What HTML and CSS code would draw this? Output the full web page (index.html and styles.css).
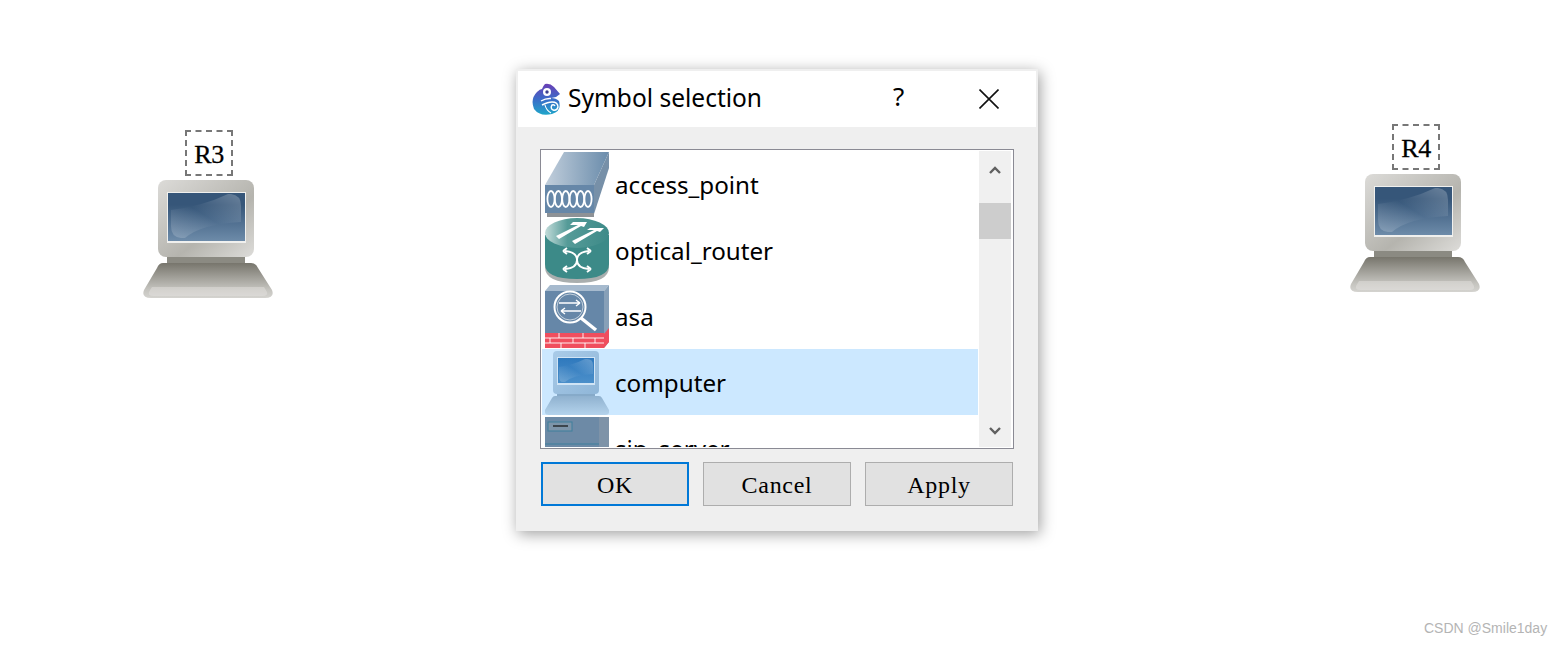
FILE: index.html
```html
<!DOCTYPE html>
<html lang="en">
<head>
    <meta charset="UTF-8">
    <title>Symbol selection</title>
    <link rel="stylesheet" href="styles.css">
</head>
<body>
    <svg class="defs" width="0" height="0">
        <defs>
            <linearGradient id="grayCase" x1="0" y1="0" x2="1" y2="1">
                <stop offset="0" stop-color="#dcdbd8"/><stop offset="0.6" stop-color="#b5b4ae"/><stop offset="1" stop-color="#dddcd9"/>
            </linearGradient>
            <linearGradient id="grayBase" x1="0" y1="0" x2="0" y2="1">
                <stop offset="0" stop-color="#77756c"/><stop offset="0.75" stop-color="#c4c3be"/><stop offset="1" stop-color="#d4d3cf"/>
            </linearGradient>
            <linearGradient id="grayScreen" x1="0" y1="0" x2="0" y2="1">
                <stop offset="0.25" stop-color="#365679"/><stop offset="1" stop-color="#6d8ba9"/>
            </linearGradient>
            <linearGradient id="glare" x1="0" y1="1" x2="1" y2="0">
                <stop offset="0" stop-color="#fff" stop-opacity="0.2"/><stop offset="0.5" stop-color="#fff" stop-opacity="0"/><stop offset="1" stop-color="#fff" stop-opacity="0.26"/>
            </linearGradient>
            <linearGradient id="blueCase" x1="0" y1="0" x2="1" y2="1">
                <stop offset="0" stop-color="#a9cbe8"/><stop offset="1" stop-color="#8fb6d8"/>
            </linearGradient>
            <linearGradient id="blueBase" x1="0" y1="0" x2="0" y2="1">
                <stop offset="0" stop-color="#8fb1cf"/><stop offset="1" stop-color="#b4d3ec"/>
            </linearGradient>
            <linearGradient id="blueScreen" x1="0" y1="0" x2="0" y2="1">
                <stop offset="0" stop-color="#2f79bd"/><stop offset="1" stop-color="#4b8fca"/>
            </linearGradient>
            <linearGradient id="apTop" x1="0" y1="0" x2="1" y2="0">
                <stop offset="0" stop-color="#c2cfdc"/><stop offset="1" stop-color="#6a8cab"/>
            </linearGradient>
            <linearGradient id="routerTop" x1="0" y1="0" x2="1" y2="0">
                <stop offset="0" stop-color="#c3dcda"/><stop offset="0.35" stop-color="#559b98"/><stop offset="1" stop-color="#3d8a88"/>
            </linearGradient>
            <linearGradient id="logoFill" x1="0" y1="0" x2="0" y2="1">
                <stop offset="0" stop-color="#6a3fb5"/><stop offset="0.5" stop-color="#3a6cc8"/><stop offset="1" stop-color="#1fa6c9"/>
            </linearGradient>
            <symbol id="grayPc" viewBox="0 0 130 118">
                <rect x="24" y="75" width="78" height="9" fill="#8b8a82"/>
                <rect x="15" y="0" width="96" height="77" rx="8" fill="url(#grayCase)"/>
                <rect x="24" y="12" width="79" height="51" fill="#f0f0ee"/>
                <rect x="25" y="13" width="77" height="48" fill="url(#grayScreen)"/>
                <path d="M28 30 Q60 26 85 14 H88 Q98 15 98 26 V42 Q58 44 42 58 H38 Q28 57 28 46Z" fill="url(#glare)"/>
                <path d="M20 83 H108 Q113 83 115 88 L129 110 Q132 118 122 118 H8 Q-2 118 1 110 L14 88 Q16 83 20 83Z" fill="url(#grayBase)"/>
                <path d="M6 112 Q5 116 10 116 H120 Q125 116 124 112 L121 107 H9Z" fill="#e6e5e2" opacity="0.45"/>
            </symbol>
            <symbol id="bluePc" viewBox="0 0 64 65">
                <rect x="12" y="42" width="38" height="5" fill="#86aac9"/>
                <rect x="8" y="1" width="46" height="43" rx="4" fill="url(#blueCase)"/>
                <rect x="12" y="7" width="38" height="28" fill="#d0e4f5"/>
                <rect x="13" y="8" width="36" height="25" fill="url(#blueScreen)"/>
                <path d="M14 17 Q28 15 40 9 H42 Q48 9 48 15 V24 Q28 25 20 32 H18 Q14 32 14 27Z" fill="url(#glare)"/>
                <path d="M10 46 H54 Q56 46 57 48 L64 60 Q65 65 60 65 H4 Q-1 65 0 60 L7 48 Q8 46 10 46Z" fill="url(#blueBase)"/>
            </symbol>
        </defs>
    </svg>

    <div class="node node-r3">
        <div class="node-label">R3</div>
        <svg class="node-pc"><use href="#grayPc"/></svg>
    </div>
    <div class="node node-r4">
        <div class="node-label">R4</div>
        <svg class="node-pc"><use href="#grayPc"/></svg>
    </div>

    <div class="dialog">
        <div class="titlebar">
            <svg class="logo" viewBox="0 0 30 32">
                <path d="M13 1 Q18 0 22 4 L28 11 L24 14 L19 15 Q24 15 27 18 Q30 28 20 31 Q8 34 2 26 Q-2 16 5 9 Q8 6 10 6 Q11 3 13 1Z" fill="url(#logoFill)"/>
                <circle cx="15" cy="9" r="4" fill="#fff"/>
                <circle cx="15" cy="9" r="1.7" fill="#3b3f8f"/>
                <path d="M9 18 Q14 15 19 15.5 M10 22 Q16 19 20 19 Q26 19 26 24 Q25 28 21 27 Q18 25 20 22 Q22 21 23 23" fill="none" stroke="#fff" stroke-width="1.4"/>
                <path d="M13 22 Q14 27 19 30" fill="none" stroke="#fff" stroke-width="1.1"/>
            </svg>
            <span class="title">Symbol selection</span>
            <span class="help">?</span>
            <svg class="close" viewBox="0 0 20 20"><path d="M0.5 0.5 L19.5 19.5 M19.5 0.5 L0.5 19.5" stroke="#111" stroke-width="1.6" fill="none"/></svg>
        </div>
        <div class="content">
            <div class="listbox">
                <div class="rows">
                    <div class="row">
                        <svg class="icon" viewBox="0 0 64 65">
                            <path d="M0 33 L19 0 H64 L49 33Z" fill="url(#apTop)"/>
                            <path d="M49 33 L64 0 V16 L49 62Z" fill="#7790a8"/>
                            <rect x="2" y="61" width="47" height="4" fill="#8e9296"/>
                            <rect x="0" y="33" width="49" height="28" fill="#6687a8"/>
                            <g fill="none" stroke="#fff" stroke-width="1.8">
                                <ellipse cx="6" cy="47" rx="3.6" ry="8"/><ellipse cx="13.4" cy="47" rx="3.6" ry="8"/>
                                <ellipse cx="20.8" cy="47" rx="3.6" ry="8"/><ellipse cx="28.2" cy="47" rx="3.6" ry="8"/>
                                <ellipse cx="35.6" cy="47" rx="3.6" ry="8"/><ellipse cx="43" cy="47" rx="3.6" ry="8"/>
                            </g>
                        </svg>
                        <span>access_point</span>
                    </div>
                    <div class="row">
                        <svg class="icon" viewBox="0 0 64 65">
                            <path d="M0 17 V49 Q0 65 32 65 Q64 65 64 49 V17Z" fill="#a9aeae"/>
                            <path d="M0 17 V46 Q0 61 32 61 Q64 61 64 46 V17Z" fill="#3c8a88"/>
                            <ellipse cx="32" cy="15" rx="32" ry="15" fill="url(#routerTop)"/>
                            <path d="M11 18 L33 7 H25 L28 4 H42 L39 9 L36 8 L14 21Z M27 23 L49 12 H42 L45 10 H59 L55 14 L52 13 L30 26Z" fill="#fff"/>
                            <g fill="none" stroke="#fff" stroke-width="1.9">
                                <path d="M20 33 Q32 34 32 42 Q32 50 20 51 M44 33 Q32 34 32 42 Q32 50 44 51"/>
                                <path d="M18 33 L22 30 M18 33 L22 36 M46 33 L42 30 M46 33 L42 36 M18 51 L22 48 M18 51 L22 54 M46 51 L42 48 M46 51 L42 54"/>
                            </g>
                        </svg>
                        <span>optical_router</span>
                    </div>
                    <div class="row">
                        <svg class="icon" viewBox="0 0 64 65">
                            <path d="M0 7 L5 1 H64 L59 7Z" fill="#a6bace"/>
                            <path d="M59 7 L64 1 V58 L59 64Z" fill="#87a0b8"/>
                            <rect x="0" y="7" width="59" height="43" fill="#6687a8"/>
                            <rect x="0" y="49" width="59" height="15" fill="#f04e5e"/>
                            <path d="M59 50 L64 44 V58 L59 64Z" fill="#f04e5e"/>
                            <path d="M0 54 H59 M0 59 H59 M14 49 V54 M38 49 V54 M5 54 V59 M28 54 V59 M50 54 V59 M16 59 V64 M40 59 V64" stroke="#fff" stroke-width="0.9" fill="none"/>
                            <circle cx="25" cy="23" r="15.5" fill="none" stroke="#fff" stroke-width="2"/>
                            <circle cx="25" cy="23" r="13" fill="none" stroke="#c5d2de" stroke-width="1"/>
                            <path d="M36 34 L51 46" stroke="#fff" stroke-width="3.5"/>
                            <path d="M14 19 H35 M35 19 L31 16 M35 19 L31 22 M36 27 H16 M16 27 L20 24 M16 27 L20 30" stroke="#fff" stroke-width="1.4" fill="none"/>
                        </svg>
                        <span>asa</span>
                    </div>
                    <div class="row selected">
                        <svg class="icon"><use href="#bluePc"/></svg>
                        <span>computer</span>
                    </div>
                    <div class="row">
                        <svg class="icon" viewBox="0 0 64 65">
                            <rect x="0" y="1" width="64" height="64" fill="#6d8aa6"/>
                            <rect x="54" y="1" width="10" height="64" fill="#7e93a8"/>
                            <rect x="3" y="6" width="24" height="9" fill="#7d94a9" stroke="#3f7f9c"/>
                            <path d="M8 10 H23" stroke="#111" stroke-width="1.2"/>
                            <path d="M0 28 H54 M0 32 H54" stroke="#3f7f9c"/>
                        </svg>
                        <span>sip_server</span>
                    </div>
                </div>
                <div class="scrollbar">
                    <div class="scroll-btn">
                        <svg viewBox="0 0 12 8"><path d="M1 7 L6 2 L11 7" fill="none" stroke="#606060" stroke-width="2.4"/></svg>
                    </div>
                    <div class="thumb"></div>
                    <div class="track"></div>
                    <div class="scroll-btn down">
                        <svg viewBox="0 0 12 8"><path d="M1 1 L6 6 L11 1" fill="none" stroke="#606060" stroke-width="2.4"/></svg>
                    </div>
                </div>
            </div>
            <div class="buttons">
                <button class="btn default">OK</button>
                <button class="btn">Cancel</button>
                <button class="btn">Apply</button>
            </div>
        </div>
    </div>

    <div class="watermark">CSDN @Smile1day</div>
</body>
</html>
```

FILE: styles.css
```css
* { margin: 0; padding: 0; box-sizing: border-box; }
html, body { height: 100%; }
body {
    background: #fff;
    font-family: "Noto Sans", sans-serif;
    color: #000;
    overflow: hidden;
    position: relative;
}
.defs { position: absolute; }

/* canvas nodes */
.node {
    position: absolute;
    width: 130px;
    display: flex;
    flex-direction: column;
    align-items: center;
    gap: 4px;
}
.node-r3 { left: 143px; top: 130px; }
.node-r4 { left: 1350px; top: 124px; }
.node-label {
    width: 48px;
    height: 46px;
    border: 2px dashed #777;
    font-family: "Liberation Serif", serif;
    font-size: 26px;
    letter-spacing: -0.5px;
    -webkit-text-stroke: 0.3px #000;
    line-height: 46px;
    text-align: center;
    margin-left: 2px;
}
.node-pc { width: 130px; height: 118px; display: block; }

/* dialog */
.dialog {
    position: absolute;
    left: 516px;
    top: 69px;
    width: 522px;
    height: 462px;
    background: #efefef;
    border: 2px solid #efefef;
    box-shadow: 2px 3px 14px rgba(0, 0, 0, 0.38);
    display: flex;
    flex-direction: column;
}
.titlebar {
    height: 56px;
    background: #fff;
    display: flex;
    align-items: center;
    padding-left: 14px;
    flex-shrink: 0;
}
.logo { width: 30px; height: 32px; flex-shrink: 0; }
.title { font-size: 24.5px; margin-left: 6px; width: 325px; padding-bottom: 4px; white-space: nowrap; }
.help { font-size: 26px; width: 86px; padding-bottom: 6px; }
.close { width: 20px; height: 20px; }

.content { padding: 22px 22px 0 22px; }
.listbox {
    height: 300px;
    border: 1px solid #8a8a94;
    background: #fff;
    padding: 1px 2px 1px 1px;
    display: flex;
    gap: 1px;
}
.rows { flex: 1; overflow: hidden; }
.row {
    height: 66px;
    display: flex;
    align-items: center;
    font-size: 24.2px;
    padding-left: 3px;
    white-space: nowrap;
}
.row.selected { background: #cce8ff; }
.icon { width: 64px; height: 65px; flex-shrink: 0; margin-right: 6px; display: block; }

.scrollbar {
    width: 32px;
    background: #f0f0f0;
    display: flex;
    flex-direction: column;
}
.scroll-btn {
    height: 52px;
    display: flex;
    justify-content: center;
    align-items: flex-start;
    padding-top: 15px;
}
.scroll-btn.down { height: 30px; padding-top: 10px; }
.scroll-btn svg { width: 12px; height: 8px; }
.thumb { height: 36px; background: #cdcdcd; }
.track { flex: 1; }

.buttons {
    display: flex;
    gap: 14px;
    margin-top: 13px;
    margin-left: 1px;
}
.btn {
    width: 148px;
    height: 44px;
    padding-top: 2px;
    background: #e1e1e1;
    border: 1px solid #adadad;
    font-family: "Liberation Serif", serif;
    font-size: 24px;
    letter-spacing: 0.7px;
    color: #000;
}
.btn.default { border: 2px solid #0078d7; }

.watermark {
    position: absolute;
    left: 1424px;
    top: 620px;
    font-family: "Liberation Sans", sans-serif;
    font-size: 14px;
    color: #b4b4b4;
    white-space: nowrap;
}
```
